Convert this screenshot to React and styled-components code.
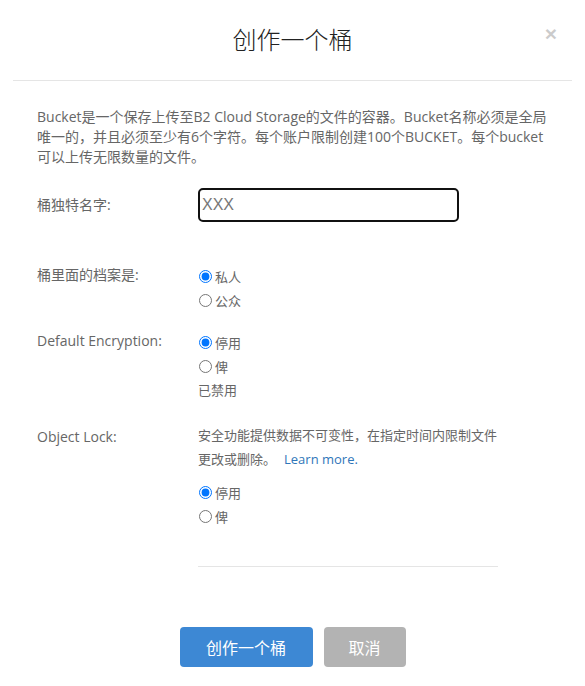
import React from "react";
import styled, { createGlobalStyle } from "styled-components";

const GlobalStyle = createGlobalStyle`
  body {
    margin: 0;
    background: #fff;
    font-family: "Open Sans", "Noto Sans CJK SC", sans-serif;
  }
`;

const Modal = styled.div`
  width: 585px;
  height: 686px;
  background: #fff;
  display: flex;
  flex-direction: column;
`;

const Header = styled.div`
  position: relative;
  height: 80px;
  margin: 0 13px;
  border-bottom: 1px solid #e5e5e5;
  display: flex;
  align-items: center;
  justify-content: center;
`;

const Title = styled.h2`
  margin: 0 0 3px;
  font-family: "Noto Sans CJK SC", sans-serif;
  font-weight: 300;
  font-size: 24px;
  color: #222;
`;

const Close = styled.button`
  position: absolute;
  right: 15px;
  top: 22px;
  border: 0;
  background: none;
  padding: 0;
  font-family: "Liberation Sans", sans-serif;
  font-size: 21px;
  font-weight: 700;
  color: #000;
  opacity: 0.2;
  cursor: pointer;
`;

const Body = styled.div`
  padding: 26px 37px 0;
`;

const Intro = styled.p`
  margin: 0;
  font-size: 14px;
  line-height: 20px;
  color: #666;
`;

const Row = styled.div`
  display: grid;
  grid-template-columns: 161px 312px;
  margin-top: ${(p) => p.$top}px;
`;

const Label = styled.div`
  font-size: 14px;
  line-height: 20px;
  color: #666;
  padding-top: ${(p) => p.$pad || 0}px;
`;

const Field = styled.input`
  box-sizing: border-box;
  width: 261px;
  height: 34px;
  border: 2px solid #111;
  border-radius: 5px;
  padding: 0 2px;
  font-family: "Liberation Sans", sans-serif;
  font-size: 16px;
  color: #333;
  outline: none;
  &::placeholder {
    color: #777;
  }
`;

const Options = styled.div`
  display: flex;
  flex-direction: column;
  margin-top: ${(p) => p.$top || 0}px;
`;

const Option = styled.label`
  display: flex;
  align-items: center;
  height: 24px;
  font-size: 13px;
  color: #666;
  input {
    width: 13px;
    height: 13px;
    margin: 0 3px 0 1px;
  }
`;

const Note = styled.div`
  height: 24px;
  line-height: 24px;
  font-size: 13px;
  color: #666;
`;

const Desc = styled.p`
  margin: 0;
  font-size: 13px;
  line-height: 24px;
  color: #666;
  a {
    color: #2f76b9;
    text-decoration: none;
    margin-left: 8px;
  }
`;

const Divider = styled.hr`
  width: 300px;
  margin: 38px 0 0 198px;
  border: 0;
  border-top: 1px solid #e5e5e5;
`;

const Footer = styled.div`
  display: flex;
  justify-content: center;
  gap: 11px;
  margin-top: 60px;
`;

const Button = styled.button`
  height: 40px;
  width: ${(p) => p.$w}px;
  border: 0;
  border-radius: 4px;
  background: ${(p) => (p.$primary ? "#3d88d4" : "#b3b3b3")};
  color: #fff;
  font-family: "Noto Sans CJK SC", sans-serif;
  font-size: 16px;
  cursor: pointer;
`;

export default function App() {
  return (
    <>
      <GlobalStyle />
      <Modal>
        <Header>
          <Title>创作一个桶</Title>
          <Close>×</Close>
        </Header>
        <Body>
          <Intro>
            Bucket是一个保存上传至B2 Cloud Storage的文件的容器。Bucket名称必须是全局唯一的，并且必须至少有6个字符。每个账户限制创建100个BUCKET。每个bucket可以上传无限数量的文件。
          </Intro>
          <Row $top={21}>
            <Label $pad={7}>桶独特名字:</Label>
            <Field placeholder="XXX" />
          </Row>
          <Row $top={43}>
            <Label>桶里面的档案是:</Label>
            <Options $top={-1}>
              <Option>
                <input type="radio" name="privacy" defaultChecked />
                私人
              </Option>
              <Option>
                <input type="radio" name="privacy" />
                公众
              </Option>
            </Options>
          </Row>
          <Row $top={19}>
            <Label>Default Encryption:</Label>
            <Options $top={-1}>
              <Option>
                <input type="radio" name="enc" defaultChecked />
                停用
              </Option>
              <Option>
                <input type="radio" name="enc" />
                俾
              </Option>
              <Note>已禁用</Note>
            </Options>
          </Row>
          <Row $top={21}>
            <Label $pad={4}>Object Lock:</Label>
            <div>
              <Desc>
                安全功能提供数据不可变性，在指定时间内限制文件
                <br />
                更改或删除。
                <a href="#">Learn more.</a>
              </Desc>
              <Options $top={9}>
                <Option>
                  <input type="radio" name="lock" defaultChecked />
                  停用
                </Option>
                <Option>
                  <input type="radio" name="lock" />
                  俾
                </Option>
              </Options>
            </div>
          </Row>
        </Body>
        <Divider />
        <Footer>
          <Button $primary $w={133}>创作一个桶</Button>
          <Button $w={82}>取消</Button>
        </Footer>
      </Modal>
    </>
  );
}
